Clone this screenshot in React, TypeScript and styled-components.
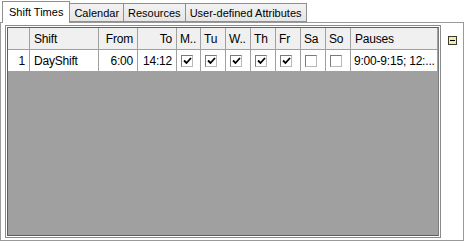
import styled, { createGlobalStyle } from "styled-components";

const Global = createGlobalStyle`
  html, body {
    margin: 0;
    padding: 0;
    background: #ffffff;
  }
  body {
    font-family: "Liberation Sans", Arial, sans-serif;
    font-size: 11px;
    color: #000000;
  }
`;

const Window = styled.div`
  width: 464px;
  height: 241px;
  display: flex;
  flex-direction: column;
  overflow: hidden;
`;

const TabStrip = styled.div`
  display: flex;
  align-items: flex-end;
  height: 22px;
  padding-left: 2px;
`;

const Tab = styled.div<{ $active?: boolean }>`
  position: relative;
  z-index: ${(p) => (p.$active ? 2 : 1)};
  height: ${(p) => (p.$active ? 22 : 19)}px;
  margin-bottom: ${(p) => (p.$active ? -1 : 0)}px;
  margin-left: ${(p) => (p.$active ? 0 : -1)}px;
  padding: 0 ${(p) => (p.$active ? 6 : 4)}px;
  box-sizing: border-box;
  display: flex;
  align-items: center;
  padding-bottom: ${(p) => (p.$active ? 2 : 0)}px;
  border: 1px solid #8e8f8f;
  border-bottom: ${(p) => (p.$active ? "none" : "1px solid #8e8f8f")};
  background: ${(p) => (p.$active ? "#ffffff" : "linear-gradient(#f2f2f2, #e6e6e6)")};
  white-space: nowrap;
`;

const Panel = styled.div`
  flex: 1;
  display: flex;
  align-items: flex-start;
  border: 1px solid #9a9a9a;
  padding: 2px 0 0 4px;
  background: #ffffff;
`;

const GridFrame = styled.div`
  width: 436px;
  height: 213px;
  box-sizing: border-box;
  border: 1px solid #8a8a8a;
  padding: 1px;
  background: #ffffff;
  display: flex;
`;

const GridInner = styled.div`
  flex: 1;
  border: 1px solid #5f5f5f;
  border-right-color: #7a7a7a;
  background: #a0a0a0;
  display: flex;
  flex-direction: column;
  overflow: hidden;
`;

const Row = styled.div<{ $cols: string }>`
  display: grid;
  grid-template-columns: ${(p) => p.$cols};
  height: 22px;
`;

const Cell = styled.div<{ $head?: boolean; $right?: boolean; $pad?: number }>`
  box-sizing: border-box;
  border-right: 1px solid #a0a0a0;
  border-bottom: 1px solid #a0a0a0;
  background: ${(p) => (p.$head ? "#f0f0f0" : "#ffffff")};
  display: flex;
  align-items: center;
  justify-content: ${(p) => (p.$right ? "flex-end" : "flex-start")};
  padding: 0 ${(p) => (p.$right ? 4 : 0)}px 0 ${(p) => p.$pad ?? 4}px;
  white-space: nowrap;
  overflow: hidden;
  font-size: 12px;
  letter-spacing: -0.2px;
`;

const Box = styled.div`
  width: 12px;
  height: 12px;
  box-sizing: border-box;
  border: 1px solid #7a7a7a;
  border-right-color: #b8b8b8;
  border-bottom-color: #b8b8b8;
  background: #ffffff;
  display: flex;
  align-items: center;
  justify-content: center;
`;

const Side = styled.div`
  padding: 11px 0 0 7px;
`;

const Collapse = styled.div`
  width: 9px;
  height: 9px;
  box-sizing: border-box;
  border: 1px solid #3c3c2c;
  background: #eeeab0;
  display: flex;
  align-items: center;
  justify-content: center;
  &::after {
    content: "";
    width: 5px;
    height: 1px;
    background: #000000;
  }
`;

const COLS = "22px 69px 39px 39px 24px 25px 25px 25px 25px 25px 25px 87px";

const Check = ({ on }: { on: boolean }) => (
  <Box>
    {on && (
      <svg width="9" height="8" viewBox="0 0 9 8">
        <path d="M1 3.5 L3.5 6 L8 1" fill="none" stroke="#000" strokeWidth="1.8" />
      </svg>
    )}
  </Box>
);

const tabs = ["Shift Times", "Calendar", "Resources", "User-defined Attributes"];
const days = ["M..", "Tu", "W..", "Th", "Fr", "Sa", "So"];
const checked = [true, true, true, true, true, false, false];

export default function App() {
  return (
    <Window>
      <Global />
      <TabStrip>
        {tabs.map((t, i) => (
          <Tab key={t} $active={i === 0}>
            {t}
          </Tab>
        ))}
      </TabStrip>
      <Panel>
        <GridFrame>
          <GridInner>
            <Row $cols={COLS}>
              <Cell $head />
              <Cell $head>Shift</Cell>
              <Cell $head $right>From</Cell>
              <Cell $head $right>To</Cell>
              {days.map((d) => (
                <Cell $head key={d} $pad={3}>
                  {d}
                </Cell>
              ))}
              <Cell $head>Pauses</Cell>
            </Row>
            <Row $cols={COLS}>
              <Cell $right>1</Cell>
              <Cell>DayShift</Cell>
              <Cell $right>6:00</Cell>
              <Cell $right>14:12</Cell>
              {checked.map((c, i) => (
                <Cell key={i}>
                  <Check on={c} />
                </Cell>
              ))}
              <Cell $pad={3}>9:00-9:15; 12:...</Cell>
            </Row>
          </GridInner>
        </GridFrame>
        <Side>
          <Collapse />
        </Side>
      </Panel>
    </Window>
  );
}
